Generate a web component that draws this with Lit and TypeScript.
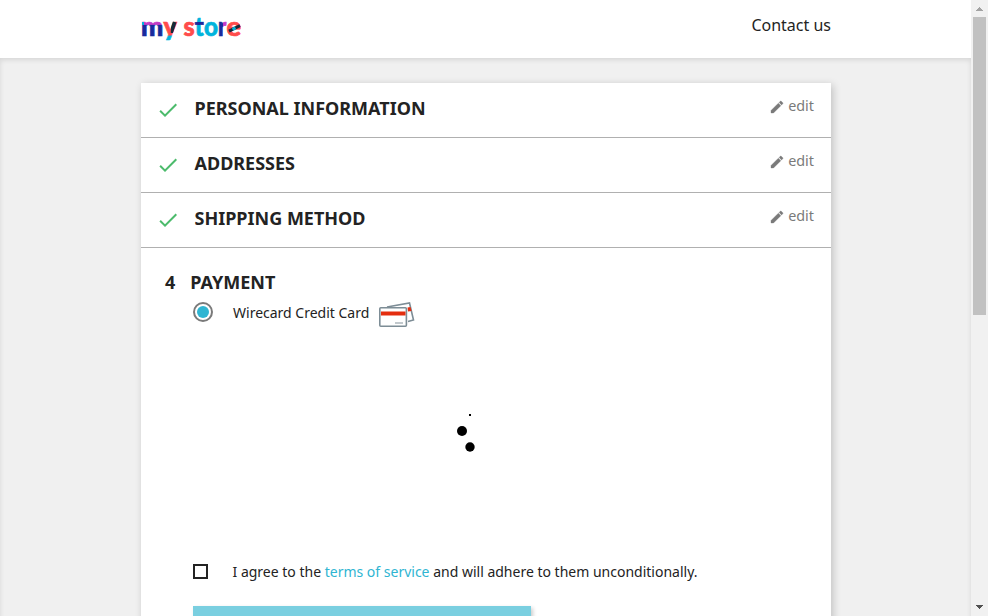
import { LitElement, html, svg, css } from "lit";
import { customElement } from "lit/decorators.js";

const steps = ["Personal Information", "Addresses", "Shipping Method"];

@customElement("store-logo")
class StoreLogo extends LitElement {
  static styles = css`
    :host { display: block; width: 104px; height: 43px; }
    svg { display: block; }
    text { font: 900 26.5px Lato, sans-serif; stroke-width: .7px; }
  `;
  render() {
    const letters: [string, number, number, string][] = [
      ["m", 0, 22.3, "url(#m)"], ["y", 22.4, 13.4, "url(#y)"], ["s", 42.4, 11.2, "#ff4c4b"],
      ["t", 53.8, 9, "url(#t)"], ["o", 62.9, 14, "#00b4dc"], ["r", 77, 8.3, "url(#r)"], ["e", 85.4, 14.6, "#ff4c4b"],
    ];
    return html`<svg width="104" height="43" viewBox="0 -10 104 43">
      <defs>
        <linearGradient id="m" gradientUnits="userSpaceOnUse" x1="0" x2="0" y1="6" y2="21"><stop offset=".23" stop-color="#c33bc6"/><stop offset=".27" stop-color="#1a2a9c"/></linearGradient>
        <linearGradient id="y" gradientUnits="userSpaceOnUse" x1="0" x2="0" y1="0" y2="30"><stop offset=".67" stop-color="#ff4c4b"/><stop offset=".7" stop-color="#00b4dc"/></linearGradient>
        <linearGradient id="t" gradientUnits="userSpaceOnUse" x1="0" x2="0" y1="0" y2="20"><stop offset=".33" stop-color="#00b4dc"/><stop offset=".35" stop-color="#1a2a9c"/><stop offset=".48" stop-color="#1a2a9c"/><stop offset=".5" stop-color="#00b4dc"/></linearGradient>
        <linearGradient id="r" gradientUnits="userSpaceOnUse" x1="77" x2="86" y1="0" y2="0"><stop offset=".5" stop-color="#1a2a9c"/><stop offset=".55" stop-color="#c33bc6"/></linearGradient>
        <clipPath id="stem"><path d="M29.8 4h8v14h-8z"/></clipPath>
      </defs>
      ${letters.map(([c, x, w, f]) => svg`<text x=${x} y="20.5" textLength=${w} lengthAdjust="spacingAndGlyphs" fill=${f} stroke=${f}>${c}</text>`)}
      <path clip-path="url(#stem)" d="M33.7 7 30 18" stroke="#152b3a" stroke-width="3.7"/>
      <path d="M1 7h2v3H1z" fill="#00b4dc"/>
      <path d="M88 16.2l11-5.6" stroke="#152b3a" stroke-width="3"/>
      <path d="M91.5 14.4l3-1.5" stroke="#00b4dc" stroke-width="3"/>
    </svg>`;
  }
}

@customElement("checkout-step")
class CheckoutStep extends LitElement {
  static properties = { label: {} };
  declare label: string;
  static styles = css`
    :host { display: flex; box-sizing: border-box; height: 55px; padding: 0 17px 0 14.5px; border-bottom: 1px solid #b0b0b0; align-items: flex-start; }
    .check { width: 24px; height: 24px; margin-top: 15px; fill: #4cbb6c; }
    h1 { margin: 13px 0 0 15px; font: 700 18px/25px "Noto Sans", sans-serif; text-transform: uppercase; flex: 1; }
    .edit { display: flex; color: #7a7a7a; font: 14.4px/22px "Noto Sans", sans-serif; margin-top: 12px; }
    .pencil { width: 16px; height: 16px; fill: #7a7a7a; stroke: #7a7a7a; stroke-width: .5; margin: 4px 3px 0 0; }
  `;
  render() {
    return html`
      <svg class="check" viewBox="0 0 24 24"><path d="M9 16.17 4.83 12l-1.42 1.41L9 19 21 7l-1.41-1.41z"/></svg>
      <h1>${this.label}</h1>
      <span class="edit"><svg class="pencil" viewBox="0 0 24 24"><path d="M3 17.25V21h3.75L17.81 9.94l-3.75-3.75L3 17.25zM20.71 7.04c.39-.39.39-1.02 0-1.41l-2.34-2.34c-.39-.39-1.02-.39-1.41 0l-1.83 1.83 3.75 3.75 1.83-1.83z"/></svg>edit</span>`;
  }
}

@customElement("app-root")
class AppRoot extends LitElement {
  static styles = css`
    :host { display: flex; width: 988px; height: 616px; overflow: hidden; background: #f0f0f0; color: #232323; font-family: "Noto Sans", sans-serif; }
    .page { width: 971px; height: 616px; overflow: hidden; display: flex; flex-direction: column; }
    header { box-sizing: border-box; height: 58px; flex: none; background: #fff; padding: 5px 140px 0 141px; display: flex; justify-content: space-between; position: relative; z-index: 1; }
    .contact { font-size: 16px; line-height: 20px; margin-top: 10px; }
    main { flex: 1; padding: 25px 140px 0 141px; box-shadow: inset 0 2px 5px 0 rgba(0,0,0,.11); }
    .card { background: #fff; height: 620px; box-shadow: 2px 2px 8px 0 rgba(0,0,0,.2); }
    .payment { padding: 22px 24px 0; }
    h1 { margin: 0; font-size: 18px; line-height: 25px; font-weight: 700; display: flex; gap: 15px; }
    .option { display: flex; align-items: center; height: 30px; margin: 2px 0 0 28px; font-size: 14px; }
    .radio { box-sizing: border-box; width: 20px; height: 20px; border: 2px solid #7a7a7a; border-radius: 50%; display: grid; place-items: center; margin-right: 20px; }
    .radio::after { content: ""; width: 12px; height: 12px; border-radius: 50%; background: #2fb5d2; }
    .cards { margin: 5px 0 0 9px; }
    .spinner { display: block; margin: 81px 0 0 285px; }
    .terms { display: flex; align-items: center; height: 20px; margin: 101px 0 0 28px; font-size: 14px; white-space: nowrap; }
    .box { box-sizing: border-box; width: 15px; height: 15px; border: 2px solid #232323; margin-right: 24.5px; }
    a { color: #2fb5d2; }
    .order { width: 338px; height: 45px; margin: 25px 0 0 28px; background: #7acfe0; box-shadow: 2px 2px 4px 0 rgba(0,0,0,.2); }
    .bar { width: 17px; height: 616px; display: flex; flex-direction: column; background: #f1f1f1; }
    .thumb { width: 13px; height: 298px; margin: 0 2px; background: #c1c1c1; }
    .gap { flex: 1; }
  `;
  render() {
    return html`
      <div class="page">
        <header><store-logo></store-logo><span class="contact">Contact us</span></header>
        <main><section class="card">
          ${steps.map((s) => html`<checkout-step .label=${s}></checkout-step>`)}
          <div class="payment">
            <h1><span>4</span><span>PAYMENT</span></h1>
            <div class="option"><span class="radio"></span><span>Wirecard Credit Card</span>
              <svg class="cards" width="38" height="28" viewBox="0 0 38 28">
                <path d="M9 6 31.5 2l4 17-5.5 1.5" fill="#fff" stroke="#7d8d96" stroke-width="1.6"/>
                <path d="m29.5 6.6 3-.7 1 4-3.5.5z" fill="#e42e10"/>
                <rect x="1.8" y="6.8" width="26.6" height="18.4" rx="1" fill="#fff" stroke="#7d8d96" stroke-width="1.6"/>
                <path d="M3 10.5h24.5v4H3z" fill="#e42e10"/><path d="M17 22h8" stroke="#a8b2b8" stroke-width="1.4"/>
              </svg>
            </div>
            <svg class="spinner" width="36" height="52" viewBox="0 0 36 52"><circle cx="12" cy="23" r="5"/><circle cx="20" cy="39" r="4.7"/><path d="M19 6h2v2h-2z"/></svg>
            <div class="terms"><span class="box"></span><span>I agree to the <a>terms of service</a> and will adhere to them unconditionally.</span></div>
            <div class="order"></div>
          </div>
        </section></main>
      </div>
      <div class="bar">
        <svg width="17" height="17" shape-rendering="crispEdges"><path d="M5 11h7v-1h-1V9h-1V8H9V7H8v1H7v1H6v1H5z" fill="#a3a3a3"/></svg>
        <div class="thumb"></div><div class="gap"></div>
        <svg width="17" height="17" shape-rendering="crispEdges"><path d="M5 6h7v1h-1v1h-1v1H9v1H8V9H7V8H6V7H5z" fill="#505050"/></svg>
      </div>`;
  }
}
